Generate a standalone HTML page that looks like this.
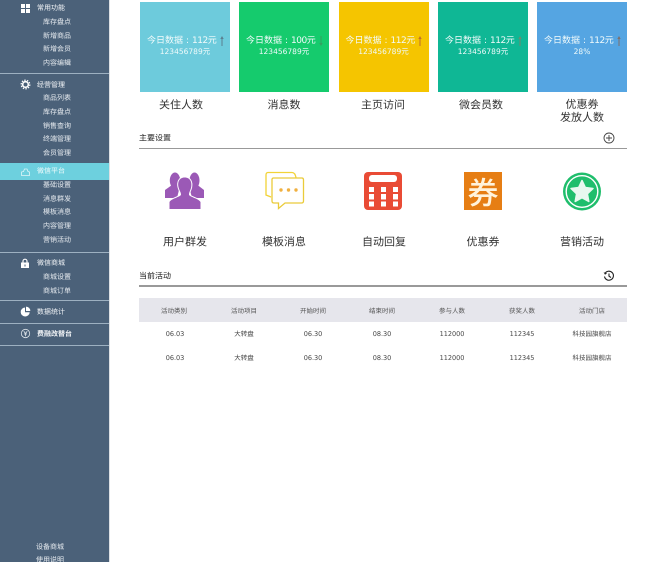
<!DOCTYPE html>
<html><head><meta charset="utf-8"><style>
html,body{margin:0;padding:0;background:#fff;width:657px;height:562px;overflow:hidden}
body{position:relative;font-family:"DejaVu Sans","Noto Sans CJK SC",sans-serif;color:#333;text-rendering:geometricPrecision}
#wrap{position:absolute;left:0;top:0;width:657px;height:562px;filter:blur(.25px)}
.a{position:absolute}
.t{position:absolute;white-space:nowrap;text-align:center;transform:translate(-50%,-50%)}
.l{position:absolute;white-space:nowrap;transform:translateY(-50%)}
#side{position:absolute;left:0;top:0;width:109px;height:562px;background:#4b6179}
.s{font-size:7px;color:#e4e9ee}
.m{font-size:7px;color:#f0f3f6}
.hr{position:absolute;left:0;width:109px;height:1px;background:#9db0c1}
.b{position:absolute;top:2px;width:90px;height:90px;color:#fff}
.b1{position:absolute;left:7px;top:32.500px;font-size:9px;line-height:12px;white-space:nowrap;color:#f2fbfb}
.b1 i{font-style:normal;letter-spacing:-.5px}
.b1 u{text-decoration:none;display:inline-block;width:9px;text-align:center}
.b2{position:absolute;left:0;width:90px;top:43.500px;text-align:center;font-size:7.500px;line-height:12px;white-space:nowrap;color:#eefafa}
.b svg{position:absolute;left:79.500px;top:34px}
.lb{font-size:11px;line-height:13px;color:#333}
.th{font-size:6.500px;color:#555}
.td{font-size:6.500px;color:#444}
</style></head><body><div id="wrap">
<div id="side"></div>
<div class="a" style="left:0;top:163px;width:109px;height:17px;background:#6dd0de"></div>
<div class="hr" style="top:73px"></div>
<div class="hr" style="top:252px"></div>
<div class="hr" style="top:300px"></div>
<div class="hr" style="top:323px"></div>
<div class="hr" style="top:345px"></div>
<div class="a" style="left:109px;top:0;width:1px;height:562px;background:#dde0e4"></div>

<svg class="a" style="left:21px;top:4px" width="9" height="9"><g fill="#fff"><rect x="0" y="0" width="4" height="4"/><rect x="5" y="0" width="4" height="4"/><rect x="0" y="5" width="4" height="4"/><rect x="5" y="5" width="4" height="4"/></g></svg>
<div class="l m" style="left:37px;top:8px">常用功能</div>
<div class="t s" style="left:57px;top:22px">库存盘点</div>
<div class="t s" style="left:57px;top:36px">新增商品</div>
<div class="t s" style="left:57px;top:49px">新增会员</div>
<div class="t s" style="left:57px;top:63px">内容编辑</div>

<svg class="a" style="left:19.500px;top:79px" width="11" height="11" viewBox="0 0 11 11"><circle cx="5.500" cy="5.500" r="2.800" fill="none" stroke="#fff" stroke-width="1.600"/><circle cx="5.500" cy="5.500" r="4.300" fill="none" stroke="#fff" stroke-width="1.300" stroke-dasharray="1.400 1.300"/></svg>
<div class="l m" style="left:37px;top:85px">经营管理</div>
<div class="t s" style="left:57px;top:98px">商品列表</div>
<div class="t s" style="left:57px;top:112px">库存盘点</div>
<div class="t s" style="left:57px;top:126px">销售查询</div>
<div class="t s" style="left:57px;top:139px">终端管理</div>
<div class="t s" style="left:57px;top:153px">会员管理</div>

<svg class="a" style="left:20px;top:167px" width="11" height="10" viewBox="0 0 11 10"><path d="M1.500 8.500V5L3.500 4.500 4.500 2H7L8 4.500 9.500 5V8.500Z" fill="none" stroke="#dff5f8" stroke-width=".8"/></svg>
<div class="l m" style="left:37px;top:171px;color:#f0fbfc">微信平台</div>
<div class="t s" style="left:57px;top:185px">基础设置</div>
<div class="t s" style="left:57px;top:199px">消息群发</div>
<div class="t s" style="left:57px;top:212px">模板消息</div>
<div class="t s" style="left:57px;top:226px">内容管理</div>
<div class="t s" style="left:57px;top:240px">营销活动</div>

<svg class="a" style="left:20px;top:258px" width="10" height="11" viewBox="0 0 10 11"><path d="M3 5V3.200a2 2 0 0 1 4 0V5" fill="none" stroke="#fff" stroke-width="1.200"/><rect x="1" y="4.500" width="8" height="5.500" fill="#fff"/><rect x="4.500" y="6.500" width="1" height="2" fill="#4b6179"/></svg>
<div class="l m" style="left:37px;top:263px">微信商城</div>
<div class="t s" style="left:57px;top:277px">商城设置</div>
<div class="t s" style="left:57px;top:291px">商城订单</div>

<svg class="a" style="left:20px;top:306px" width="11" height="11" viewBox="0 0 11 11"><path d="M5 1.500A4.500 4.500 0 1 0 9.700 6.200H5Z" fill="#fff"/><path d="M6 .6A4.300 4.300 0 0 1 10.300 5H6Z" fill="#fff"/></svg>
<div class="l m" style="left:37px;top:312px">数据统计</div>

<svg class="a" style="left:20px;top:328px" width="11" height="11" viewBox="0 0 11 11"><circle cx="5.500" cy="5.500" r="4.200" fill="none" stroke="#dfe5ea" stroke-width=".8"/><path d="M3.800 3.200 5.500 5.500 7.200 3.200M5.500 5.500V8.200M4 6H7" fill="none" stroke="#dfe5ea" stroke-width=".8"/></svg>
<div class="l m" style="left:37px;top:334px;font-weight:bold">费融改替台</div>

<div class="t s" style="left:50px;top:547px">设备商城</div>
<div class="t s" style="left:50px;top:560px">使用说明</div>

<div class="b" style="left:140px;background:#6dcbdc"><div class="b1">今日数据<u>:</u><i>112</i>元</div><svg width="4" height="10" viewBox="0 0 4 10"><path d="M2 0 .3 3H1.500V10H2.500V3H3.700Z" fill="#5a7f90"/></svg><div class="b2">123456789元</div></div>
<div class="b" style="left:239px;background:#15cb6d"><div class="b1">今日数据<u>:</u><i>100</i>元</div><svg width="4" height="10" viewBox="0 0 4 10"><path d="M2 10 .3 7H1.500V0H2.500V7H3.700Z" fill="#35a060"/></svg><div class="b2">123456789元</div></div>
<div class="b" style="left:338.500px;background:#f5c500"><div class="b1">今日数据<u>:</u><i>112</i>元</div><svg width="4" height="10" viewBox="0 0 4 10"><path d="M2 0 .3 3H1.500V10H2.500V3H3.700Z" fill="#c0702a"/></svg><div class="b2">123456789元</div></div>
<div class="b" style="left:438px;background:#0fb795"><div class="b1">今日数据<u>:</u><i>112</i>元</div><svg width="4" height="10" viewBox="0 0 4 10"><path d="M2 0 .3 3H1.500V10H2.500V3H3.700Z" fill="#6f8a70"/></svg><div class="b2">123456789元</div></div>
<div class="b" style="left:537px;background:#55a5e2"><div class="b1">今日数据<u>:</u><i>112</i>元</div><svg width="4" height="10" viewBox="0 0 4 10"><path d="M2 0 .3 3H1.500V10H2.500V3H3.700Z" fill="#80706a"/></svg><div class="b2">28%</div></div>

<div class="t lb" style="left:181px;top:105px">关住人数</div>
<div class="t lb" style="left:284px;top:105px">消息数</div>
<div class="t lb" style="left:383px;top:105px">主页访问</div>
<div class="t lb" style="left:481px;top:105px">微会员数</div>
<div class="t lb" style="left:582px;top:111px">优惠券<br>发放人数</div>

<div class="l" style="left:139px;top:138px;font-size:8px;color:#222">主要设置</div>
<svg class="a" style="left:602.500px;top:132px" width="12" height="12" viewBox="0 0 12 12"><circle cx="6" cy="6" r="5" fill="none" stroke="#444" stroke-width=".9"/><path d="M6 3V9M3 6H9" stroke="#444" stroke-width=".9"/></svg>
<div class="a" style="left:139px;top:148px;width:488px;height:1px;background:#999"></div>

<svg class="a" style="left:165px;top:172px" width="40" height="38" viewBox="0 0 40 38"><g fill="#9b59b6">
<ellipse cx="10" cy="8.500" rx="5.200" ry="8"/><ellipse cx="29.500" cy="8.500" rx="5" ry="8"/>
<path d="M7 13 0 18V26H12L15 14Z"/><path d="M32.500 13 39 18V26H27L24 14Z"/>
<path d="M19.700 5.500C14 5.500 12.500 10.500 13.500 15 14.200 18.500 16 20 16 22.500 16 25 7 26 4.500 30V37H35.500V30C33 26 24 25 24 22.500 24 20 25.500 18.500 26.200 15 27 10.500 25.500 5.500 19.700 5.500Z" stroke="#fff" stroke-width="2" paint-order="stroke"/></g></svg>

<svg class="a" style="left:263px;top:170px" width="42" height="40" viewBox="0 0 42 40"><g fill="none" stroke-width="1.300">
<path d="M8 27 3 25V5Q3 2.500 5 2.500H29Q32 2.500 33 7.500" stroke="#f2d337"/>
<path d="M10 8H39Q40.500 8 40.500 10V31Q40.500 33 38.500 33H22L15.500 38.500V33H11Q9 33 9 31V9Z" stroke="#eacb3a"/></g>
<g fill="#f0b040"><circle cx="18" cy="20" r="1.700"/><circle cx="25.500" cy="20" r="1.700"/><circle cx="33" cy="20" r="1.700"/></g></svg>

<svg class="a" style="left:364px;top:172px" width="38" height="38" viewBox="0 0 38 38"><rect x="0" y="0" width="38" height="38" rx="4" fill="#e94b35"/><rect x="5" y="3" width="28" height="7" rx="3" fill="#fff"/><g fill="#fff"><rect x="5" y="15" width="5" height="5"/><rect x="17" y="15" width="5" height="5"/><rect x="29" y="15" width="5" height="5"/><rect x="5" y="22" width="5" height="5.500"/><rect x="17" y="22" width="5" height="5.500"/><rect x="29" y="22" width="5" height="5.500"/><rect x="5" y="29.500" width="5" height="5"/><rect x="17" y="29.500" width="5" height="5"/><rect x="29" y="29.500" width="5" height="5"/></g></svg>

<div class="a" style="left:464px;top:172px;width:38px;height:38px;background:#e67e14;color:#fff3dc;font-size:31px;line-height:37px;text-align:center;font-weight:500;font-family:'Noto Sans CJK SC',sans-serif">券</div>

<svg class="a" style="left:562px;top:171px" width="40" height="40" viewBox="0 0 40 40"><circle cx="20" cy="20.500" r="19" fill="#1fbe6c"/><circle cx="20" cy="20.500" r="15.800" fill="none" stroke="#fff" stroke-width="1.400"/><path d="M20 9.500 23.300 16.500 31 17.500 25.400 22.800 26.800 30.500 20 26.700 13.200 30.500 14.600 22.800 9 17.500 16.700 16.500Z" fill="#e8f8ef" stroke="#e8f8ef" stroke-linejoin="round" stroke-width="1.500"/></svg>

<div class="t lb" style="left:185px;top:242px">用户群发</div>
<div class="t lb" style="left:284px;top:242px">模板消息</div>
<div class="t lb" style="left:384px;top:242px">自动回复</div>
<div class="t lb" style="left:483px;top:242px">优惠券</div>
<div class="t lb" style="left:582px;top:242px">营销活动</div>

<div class="l" style="left:139px;top:275.500px;font-size:8px;color:#222">当前活动</div>
<svg class="a" style="left:603px;top:269.500px" width="12" height="12" viewBox="0 0 12 12"><path d="M2.200 3.200A4.500 4.500 0 1 1 1.500 6.500" fill="none" stroke="#222" stroke-width="1.100"/><path d="M.6 2.300 2 4.700 4 3.200Z" fill="#222"/><path d="M6 3.500V6.200L8 7.500" fill="none" stroke="#222" stroke-width="1.100"/></svg>
<div class="a" style="left:139px;top:285px;width:488px;height:1.500px;background:#999"></div>

<div class="a" style="left:139px;top:298px;width:488px;height:24px;background:#e6e6ec"></div>
<div class="t th" style="left:174px;top:310px">活动类别</div>
<div class="t th" style="left:244px;top:310px">活动项目</div>
<div class="t th" style="left:313px;top:310px">开始时间</div>
<div class="t th" style="left:382px;top:310px">结束时间</div>
<div class="t th" style="left:452px;top:310px">参与人数</div>
<div class="t th" style="left:522px;top:310px">获奖人数</div>
<div class="t th" style="left:592px;top:310px">活动门店</div>

<div class="t td" style="left:175px;top:334px">06.03</div>
<div class="t td" style="left:244px;top:333px">大转盘</div>
<div class="t td" style="left:313px;top:334px">06.30</div>
<div class="t td" style="left:382px;top:334px">08.30</div>
<div class="t td" style="left:452px;top:334px">112000</div>
<div class="t td" style="left:522px;top:334px">112345</div>
<div class="t td" style="left:592px;top:333px">科技园旗舰店</div>

<div class="t td" style="left:175px;top:358px">06.03</div>
<div class="t td" style="left:244px;top:357px">大转盘</div>
<div class="t td" style="left:313px;top:358px">06.30</div>
<div class="t td" style="left:382px;top:358px">08.30</div>
<div class="t td" style="left:452px;top:358px">112000</div>
<div class="t td" style="left:522px;top:358px">112345</div>
<div class="t td" style="left:592px;top:357px">科技园旗舰店</div>
</div></body></html>
